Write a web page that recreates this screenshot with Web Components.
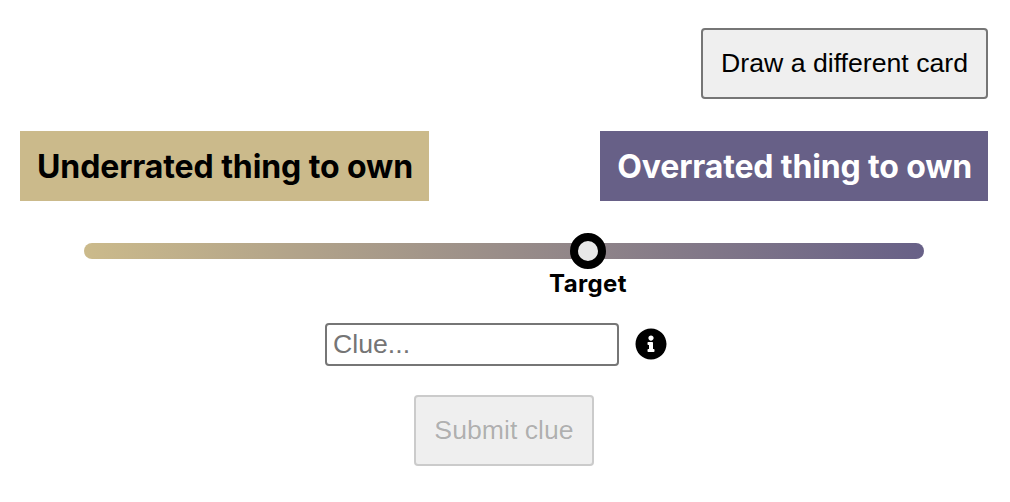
<!DOCTYPE html>
<html lang="en">
<head>
<meta charset="utf-8">
<title>Clue</title>
<style>
  html, body { margin: 0; background: #fff; }
</style>
</head>
<body>
<clue-board>
  <spectrum-card slot="cards" tone="left">Underrated thing to own</spectrum-card>
  <spectrum-card slot="cards" tone="right">Overrated thing to own</spectrum-card>
</clue-board>

<script>
const boardTemplate = document.createElement('template');
boardTemplate.innerHTML = `
  <style>
    :host {
      display: block;
      box-sizing: border-box;
      width: 1010px;
      height: 502px;
      padding: 28px 22px 0 20px;
      overflow: hidden;
    }
    .top { display: flex; justify-content: flex-end; }
    .cards { display: flex; justify-content: space-between; margin-top: 32px; }
    spectrum-slider { margin: 42px 64px 0; }
    .clue { display: flex; justify-content: center; align-items: center; margin-top: 64px; }
    input {
      box-sizing: border-box;
      width: 294px;
      height: 43px;
      padding: 0 6px;
      border: 2px solid #767676;
      border-radius: 4px;
      background: #fff;
      font: 26.67px "Liberation Sans", Arial, sans-serif;
      color: #000;
      outline: none;
    }
    input::placeholder { color: #757575; opacity: 1; }
    svg { display: block; width: 32px; height: 32px; margin: 0 16px 1px 16px; }
    .submit { display: flex; justify-content: center; margin-top: 29px; }
  </style>
  <div class="top"><plain-button>Draw a different card</plain-button></div>
  <div class="cards"><slot name="cards"></slot></div>
  <spectrum-slider></spectrum-slider>
  <div class="clue">
    <input type="text" placeholder="Clue...">
    <svg viewBox="0 0 512 512" aria-hidden="true"><path fill="#000" d="M256 8C119.043 8 8 119.083 8 256c0 136.997 111.043 248 248 248s248-111.003 248-248C504 119.083 392.957 8 256 8zm0 110c23.196 0 42 18.804 42 42s-18.804 42-42 42-42-18.804-42-42 18.804-42 42-42zm56 254c0 6.627-5.373 12-12 12h-88c-6.627 0-12-5.373-12-12v-24c0-6.627 5.373-12 12-12h12v-64h-12c-6.627 0-12-5.373-12-12v-24c0-6.627 5.373-12 12-12h64c6.627 0 12 5.373 12 12v100h12c6.627 0 12 5.373 12 12v24z"/></svg>
  </div>
  <div class="submit"><plain-button disabled>Submit clue</plain-button></div>
`;

class ClueBoard extends HTMLElement {
  constructor() {
    super();
    this.attachShadow({ mode: 'open' });
    this.shadowRoot.appendChild(boardTemplate.content.cloneNode(true));
  }
}

const buttonTemplate = document.createElement('template');
buttonTemplate.innerHTML = `
  <style>
    :host { display: inline-block; }
    button {
      display: block;
      box-sizing: border-box;
      height: 71px;
      padding: 0 18px;
      border: 2px solid #767676;
      border-radius: 4px;
      background: #efefef;
      color: #000;
      font: 26.67px "Liberation Sans", Arial, sans-serif;
    }
    button:disabled {
      border-color: rgba(118, 118, 118, 0.3);
      color: rgba(16, 16, 16, 0.3);
      background: rgba(239, 239, 239, 1);
    }
  </style>
  <button><slot></slot></button>
`;

class PlainButton extends HTMLElement {
  constructor() {
    super();
    this.attachShadow({ mode: 'open' });
    this.shadowRoot.appendChild(buttonTemplate.content.cloneNode(true));
  }

  connectedCallback() {
    this.shadowRoot.querySelector('button').disabled = this.hasAttribute('disabled');
  }
}

const cardTemplate = document.createElement('template');
cardTemplate.innerHTML = `
  <style>
    :host {
      display: flex;
      align-items: center;
      box-sizing: border-box;
      height: 70px;
      padding: 0 16px 0 17px;
      font: 700 32px Inter, "Liberation Sans", sans-serif;
      letter-spacing: -0.1px;
      white-space: nowrap;
    }
    :host([tone="left"]) { background: #cbba8b; color: #000; }
    :host([tone="right"]) { background: #676087; color: #fff; letter-spacing: -0.15px; }
  </style>
  <slot></slot>
`;

class SpectrumCard extends HTMLElement {
  constructor() {
    super();
    this.attachShadow({ mode: 'open' });
    this.shadowRoot.appendChild(cardTemplate.content.cloneNode(true));
  }
}

const sliderTemplate = document.createElement('template');
sliderTemplate.innerHTML = `
  <style>
    :host { display: block; position: relative; height: 16px; }
    .track {
      height: 16px;
      border-radius: 8px;
      background: linear-gradient(to right, #cbba8b, #676087);
    }
    .thumb {
      position: absolute;
      left: 486px;
      top: -10px;
      box-sizing: border-box;
      width: 36px;
      height: 36px;
      border: 8.5px solid #000;
      border-radius: 50%;
      background: #e8e8e8;
    }
    .label {
      position: absolute;
      left: 504px;
      top: 26px;
      transform: translateX(-50%);
      font: 700 24px Inter, "Liberation Sans", sans-serif;
      letter-spacing: 0.4px;
      color: #000;
      white-space: nowrap;
    }
  </style>
  <div class="track"></div>
  <div class="thumb"></div>
  <div class="label">Target</div>
`;

class SpectrumSlider extends HTMLElement {
  constructor() {
    super();
    this.attachShadow({ mode: 'open' });
    this.shadowRoot.appendChild(sliderTemplate.content.cloneNode(true));
  }
}

customElements.define('plain-button', PlainButton);
customElements.define('spectrum-card', SpectrumCard);
customElements.define('spectrum-slider', SpectrumSlider);
customElements.define('clue-board', ClueBoard);
</script>
</body>
</html>
